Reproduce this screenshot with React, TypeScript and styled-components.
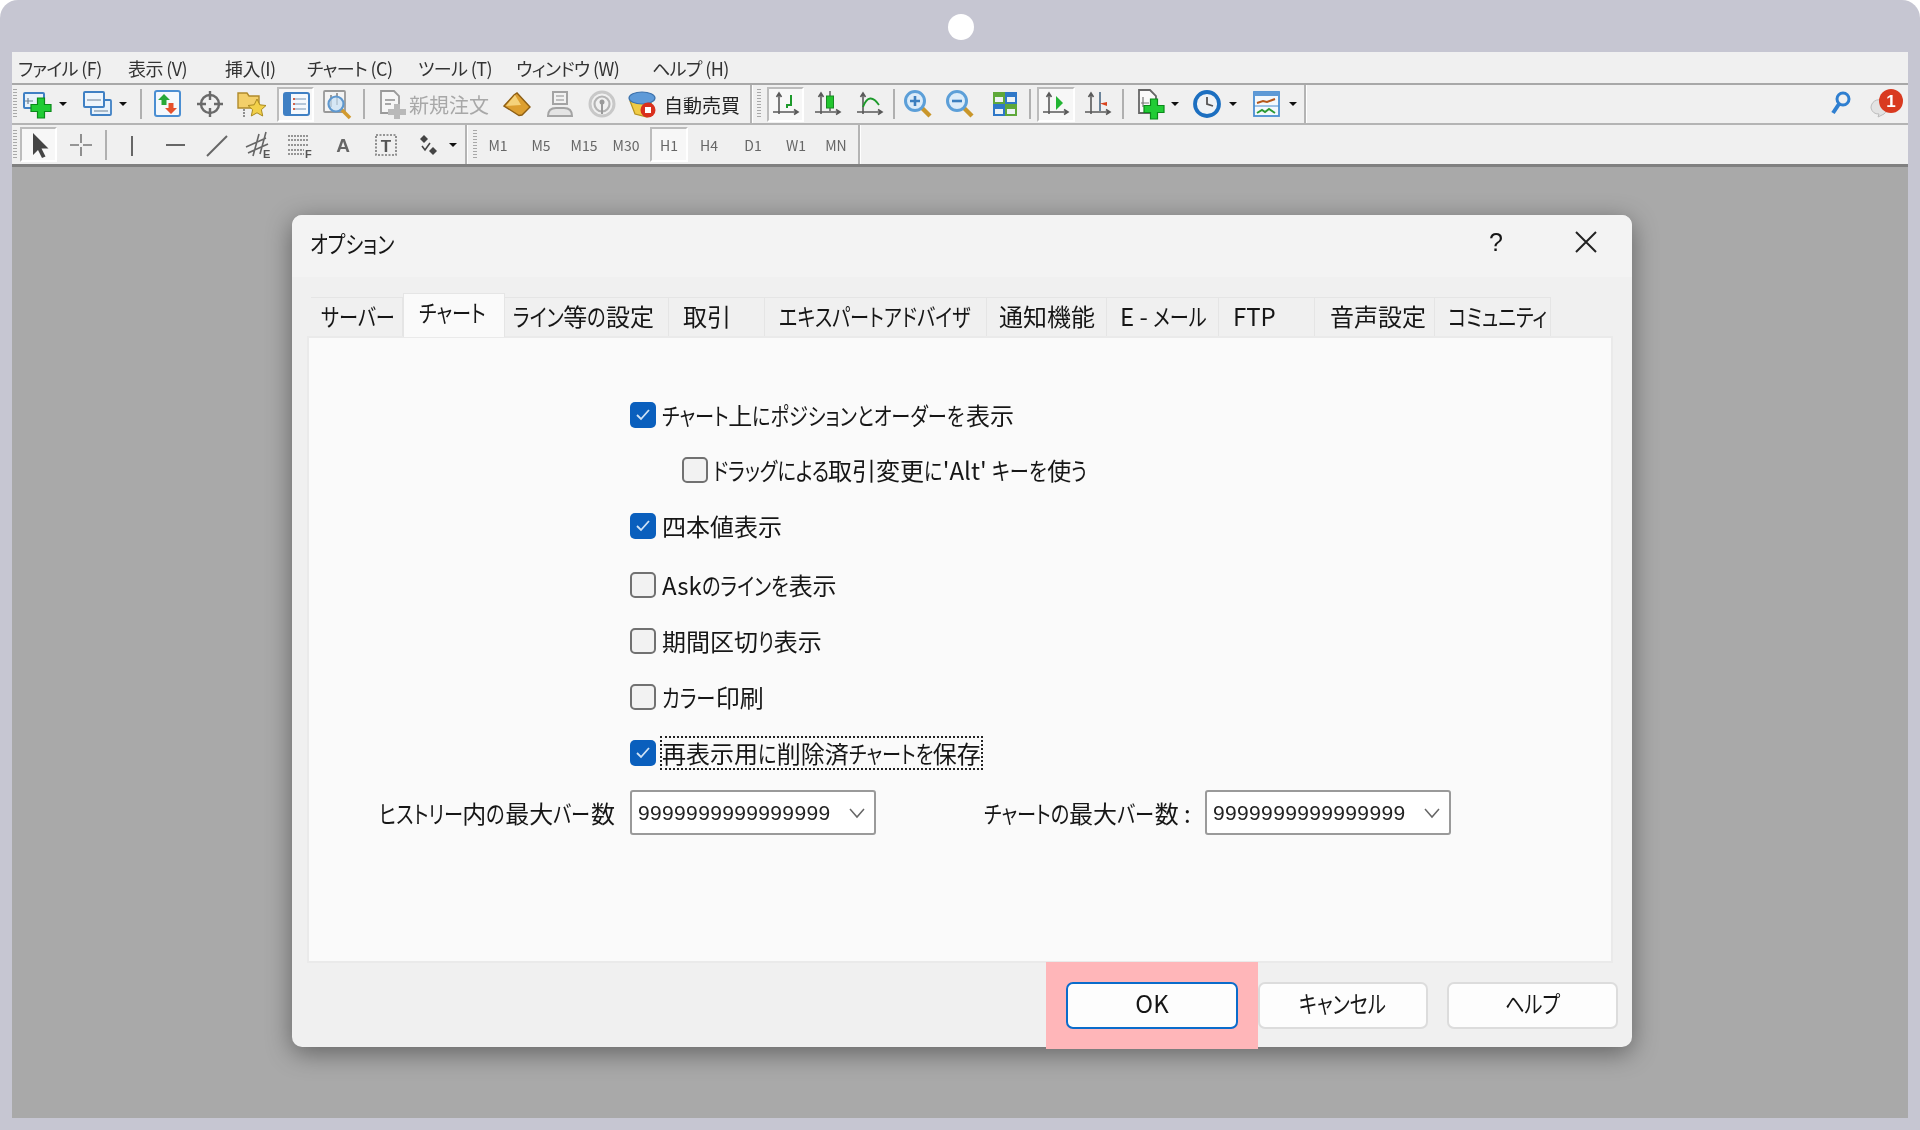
import * as React from "react";
import styled, { createGlobalStyle } from "styled-components";

const GlobalStyle = createGlobalStyle`
  html, body { margin: 0; padding: 0; background: #fff; }
  body { font-family: "Noto Sans CJK JP", "Liberation Sans", sans-serif; color: #161616; }
  * { box-sizing: border-box; }
`;

const SBezel = styled.div`
  width: 1920px;
  height: 1130px;
  background: #c6c6d2;
  border-radius: 18px 18px 0 0;
  padding: 52px 12px 12px;
  position: relative;
  overflow: hidden;
  display: flex;
  flex-direction: column;
`;

const SCamera = styled.div`
  position: absolute;
  left: 948px;
  top: 14px;
  width: 26px;
  height: 26px;
  border-radius: 50%;
  background: #fff;
`;

const SScreen = styled.div`
  flex: 1;
  display: flex;
  flex-direction: column;
  background: #a9a9a9;
  filter: blur(0.35px);
`;

const SMenuBar = styled.div`
  height: 33px;
  background: #f0f0f0;
  border-bottom: 2px solid #a8a8a8;
  display: flex;
  align-items: center;
  padding-left: 6px;
  font-size: 18px;
  color: #333;
  font-feature-settings: "palt";
`;

const SMenuItem = styled.span<{ w: number }>`
  width: ${({ w }) => w}px;
  white-space: nowrap;
  letter-spacing: -0.6px;
`;

const SToolRow = styled.div`
  height: 40px;
  background: #f0f0f0;
  border-bottom: 2px solid #b4b4b4;
  display: flex;
  align-items: center;
`;

const SToolRowLast = styled(SToolRow)`
  height: 42px;
  border-bottom: 3px solid #808080;
`;

const SToolGroup = styled.div<{ w: number }>`
  width: ${({ w }) => w}px;
  height: 100%;
  flex: none;
  display: flex;
  align-items: center;
  border-right: 2px solid #b4b4b4;
  box-shadow: 1px 0 0 #fff;
`;

const SGrip = styled.div<{ ml: number }>`
  width: 4px;
  height: 30px;
  flex: none;
  margin-left: ${({ ml }) => ml}px;
  background: repeating-linear-gradient(to bottom, #a8a8a8 0 1px, transparent 1px 3px);
`;

const STool = styled.div<{ w?: number; ml: number; active?: boolean }>`
  width: ${({ w }) => w ?? 36}px;
  height: 35px;
  margin-left: ${({ ml }) => ml}px;
  flex: none;
  display: flex;
  align-items: center;
  justify-content: center;
  font-size: 14px;
  color: #666;
  background: ${({ active }) => (active ? "#f7f7f7" : "transparent")};
  border-style: solid;
  border-width: ${({ active }) => (active ? "2px" : "0")};
  border-color: #bcbcbc #fff #fff #bcbcbc;
  svg {
    flex: none;
    overflow: visible;
  }
`;

const SToolSep = styled.div<{ ml: number }>`
  width: 2px;
  height: 30px;
  flex: none;
  background: #b0b0b0;
  margin-left: ${({ ml }) => ml}px;
`;

const SCaret = styled.div<{ ml: number }>`
  width: 0;
  height: 0;
  flex: none;
  margin-left: ${({ ml }) => ml}px;
  border-left: 4px solid transparent;
  border-right: 4px solid transparent;
  border-top: 4px solid #111;
`;

const SToolLabel = styled.span<{ w: number; ml: number; disabled?: boolean }>`
  width: ${({ w }) => w}px;
  margin-left: ${({ ml }) => ml}px;
  flex: none;
  font-size: ${({ disabled }) => (disabled ? 20 : 19)}px;
  white-space: nowrap;
  color: ${({ disabled }) => (disabled ? "#a8a8a8" : "#222")};
`;

const SToolSpacer = styled.div`
  flex: 1;
`;

const SRightIcons = styled.div`
  display: flex;
  align-items: center;
  gap: 15px;
  padding-right: 3px;
`;

const SDesktop = styled.div`
  flex: 1;
  padding: 48px 0 0 280px;
`;

const SDialog = styled.div`
  width: 1340px;
  height: 832px;
  border-radius: 10px;
  background: #f0f0f0;
  box-shadow: 0 6px 26px rgba(0, 0, 0, 0.42);
  display: flex;
  flex-direction: column;
`;

const STitleBar = styled.div`
  height: 62px;
  padding: 0 35px 8px 18px;
  display: flex;
  align-items: center;
  justify-content: space-between;
  font-size: 24px;
  background: #f3f3f3;
  border-radius: 10px 10px 0 0;
  font-feature-settings: "palt";
`;

const STitleActions = styled.div`
  display: flex;
  align-items: center;
  gap: 72px;
`;

const SHelpMark = styled.span`
  font-size: 25px;
  font-family: "Liberation Sans", sans-serif;
`;

const STabs = styled.div`
  height: 59px;
  padding: 16px 0 0 19px;
  display: flex;
  align-items: flex-end;
`;

const STab = styled.div<{ w: number; active?: boolean; pad: number }>`
  width: ${({ w }) => w}px;
  height: ${({ active }) => (active ? 44 : 39)}px;
  margin-bottom: ${({ active }) => (active ? -1 : 0)}px;
  padding-left: ${({ pad }) => pad}px;
  padding-bottom: ${({ active }) => (active ? 9 : 3)}px;
  font-size: 24px;
  line-height: 36px;
  white-space: nowrap;
  background: ${({ active }) => (active ? "#fafafa" : "#f0f0f0")};
  border: 1px solid #e5e5e5;
  border-bottom: 0;
  border-left-width: ${({ active }) => (active ? 1 : 0)}px;
  position: relative;
  font-feature-settings: "palt";
  z-index: ${({ active }) => (active ? 1 : 0)};
`;

// squeezes a run of kana, the margin takes back the width the transform does not
const SKana = styled.span<{ n: number }>`
  display: inline-block;
  transform: scaleX(0.8);
  transform-origin: 0 50%;
  margin-right: ${({ n }) => n * -0.18}em;
`;

const SPanel = styled.div`
  width: 1306px;
  height: 627px;
  margin-left: 15px;
  background: #fafafa;
  border: 2px solid #eaeaea;
  padding: 49px 0 0 321px;
  display: flex;
  flex-direction: column;
`;

const SCheckRow = styled.div<{ mt: number; nested?: boolean }>`
  height: 56px;
  margin-top: ${({ mt }) => mt}px;
  display: flex;
  align-items: center;
  padding-left: ${({ nested }) => (nested ? 52 : 0)}px;
  flex: none;
`;

const SCheckBox = styled.div<{ checked?: boolean }>`
  width: 26px;
  height: 26px;
  border-radius: 5px;
  flex: none;
  display: flex;
  align-items: center;
  justify-content: center;
  background: ${({ checked }) => (checked ? "#0a5fbd" : "#f2f2f2")};
  border: ${({ checked }) => (checked ? "0" : "2px solid #717171")};
`;

const SCheckLabel = styled.span<{ focused?: boolean; nested?: boolean }>`
  margin-left: ${({ nested }) => (nested ? 5 : 6)}px;
  font-size: 24px;
  line-height: 30px;
  white-space: nowrap;
  font-feature-settings: "palt";
  outline: ${({ focused }) => (focused ? "2px dotted #222" : "none")};
`;

const SSelectRow = styled.div`
  margin: 9px 0 0 -258px;
  display: flex;
  align-items: center;
  height: 45px;
`;

const SFieldLabel = styled.span<{ w: number; pad?: number }>`
  width: ${({ w }) => w}px;
  padding-left: ${({ pad }) => pad ?? 0}px;
  flex: none;
  font-size: 24px;
  white-space: nowrap;
  font-feature-settings: "palt";
`;

const SSelect = styled.div`
  width: 246px;
  height: 45px;
  flex: none;
  background: #fff;
  border: 2px solid #9a9a9a;
  border-radius: 3px;
  padding: 0 8px 0 6px;
  display: flex;
  align-items: center;
  justify-content: space-between;
  font-family: "Liberation Sans", sans-serif;
  font-size: 21px;
  letter-spacing: 0.35px;
  color: #222;
`;

const SSelectGap = styled.div`
  width: 108px;
  flex: none;
`;

const SFooter = styled.div`
  padding: 19px 14px 0 0;
  display: flex;
  justify-content: flex-end;
`;

const SButton = styled.div<{ w: number; primary?: boolean; gap?: number }>`
  width: ${({ w }) => w}px;
  height: 47px;
  margin-left: ${({ gap }) => gap ?? 0}px;
  padding-bottom: 5px;
  background: #fdfdfd;
  border: ${({ primary }) => (primary ? "2px solid #0a6ccb" : "2px solid #dcdcdc")};
  border-radius: 7px;
  text-align: center;
  line-height: 38px;
  font-size: 24px;
  font-feature-settings: "palt";
  position: relative;
  z-index: 1;
`;

const SHighlight = styled.div`
  position: relative;
  &::before {
    content: "";
    position: absolute;
    left: -20px;
    right: -20px;
    top: -20px;
    bottom: -20px;
    background: #ffb6b9;
  }
`;

// kana in the original UI font is much narrower than kanji
const Jp = ({ text }: { text: string }) => (
  <>
    {text.split(/([\u3040-\u30ff]+)/).map((part, i) =>
      i % 2 ? <SKana key={i} n={part.length}>{part}</SKana> : part
    )}
  </>
);

const Svg = ({ children, w = 30 }: { children: React.ReactNode; w?: number }) => (
  <svg width={w} height={30} viewBox={`0 0 ${w} 30`} fill="none">
    {children}
  </svg>
);

const Plus = ({ x, y }: { x: number; y: number }) => (
  <path
    transform={`translate(${x} ${y})`}
    d="M-3.500 -10h7v6.500h6.500v7h-6.500v6.500h-7v-6.500h-6.500v-7h6.500z"
    fill="#21cc35"
    stroke="#0b8a1a"
    strokeWidth="1.200"
  />
);

const Axes = () => (
  <path
    d="M8 5v20M2 23h24M5.500 8L8 4l2.500 4M23 20.500l4 2.500-4 2.500"
    stroke="#5a5a5a"
    strokeWidth="1.600"
  />
);

const Lens = ({ minus }: { minus?: boolean }) => (
  <>
    <path d="M19 19l8 8" stroke="#c9962a" strokeWidth="4.500" />
    <circle cx="12" cy="12" r="9.500" fill="#dcecf9" stroke="#5c9fd8" strokeWidth="3" />
    <path d={minus ? "M7 12h10" : "M7 12h10M12 7v10"} stroke="#3c7fbf" strokeWidth="2.600" />
  </>
);

const tfButtons = [
  { tf: "M1", ml: 3 },
  { tf: "M5", ml: 7 },
  { tf: "M15", ml: 7 },
  { tf: "M30", ml: 6 },
  { tf: "H1", ml: 6, active: true },
  { tf: "H4", ml: 3 },
  { tf: "D1", ml: 8 },
  { tf: "W1", ml: 7 },
  { tf: "MN", ml: 4 },
];

const App = () => {
  return (
    <SBezel>
      <GlobalStyle />
      <SCamera />
      <SScreen>
        <SMenuBar>
          <SMenuItem w={110}>ファイル (F)</SMenuItem>
          <SMenuItem w={97}>表示 (V)</SMenuItem>
          <SMenuItem w={82}>挿入(I)</SMenuItem>
          <SMenuItem w={111}>チャート (C)</SMenuItem>
          <SMenuItem w={98}>ツール (T)</SMenuItem>
          <SMenuItem w={136}>ウィンドウ (W)</SMenuItem>
          <SMenuItem w={100}>ヘルプ (H)</SMenuItem>
        </SMenuBar>

        <SToolRow>
          <SToolGroup w={740}>
            <SGrip ml={1} />
            <STool ml={2}>
              <Svg>
                <rect x="2" y="4" width="20" height="15" rx="1" fill="#e8f2fb" stroke="#3f80c4" strokeWidth="2" />
                <path d="M6 9v6M3 12h8" stroke="#6b7f92" strokeWidth="1.200" />
                <Plus x={19} y={19} />
              </Svg>
            </STool>
            <SCaret ml={4} />
            <STool ml={12}>
              <Svg>
                <rect x="9" y="11" width="20" height="15" rx="1" fill="#e8f2fb" stroke="#3f80c4" strokeWidth="1.800" />
                <rect x="2" y="3" width="20" height="15" rx="1" fill="#eef5fc" stroke="#3f80c4" strokeWidth="2" />
                <path d="M5 11h14M12 22h14" stroke="#6b7f92" strokeWidth="1.200" />
              </Svg>
            </STool>
            <SCaret ml={4} />
            <SToolSep ml={13} />
            <STool ml={7}>
              <Svg>
                <rect x="3" y="2" width="25" height="25" rx="2" fill="#f4f8fc" stroke="#4a8ed2" strokeWidth="2" />
                <path d="M12 5l6 6h-3.500v5h-5v-5H6z" fill="#27a838" />
                <path d="M19 25l-6-6h3.500v-5h5v5H25z" fill="#e5502c" />
              </Svg>
            </STool>
            <STool ml={7}>
              <Svg>
                <circle cx="15" cy="15" r="9" stroke="#6a6a6a" strokeWidth="2.400" />
                <path d="M15 2v9M15 19v9M2 15h9M19 15h9" stroke="#6a6a6a" strokeWidth="2.400" />
              </Svg>
            </STool>
            <STool ml={6}>
              <Svg>
                <path d="M1 4h9l2 3h10v12H1z" fill="#f3cf6a" stroke="#b08a2c" strokeWidth="1.400" />
                <path d="M7 20v8" stroke="#777" strokeDasharray="2 1" strokeWidth="1.600" />
                <path d="M20 10l2.800 5.800 6.200.7-4.600 4.200 1.300 6.300-5.700-3.200-5.700 3.200 1.300-6.300-4.600-4.200 6.200-.7z" fill="#f2d04a" stroke="#a98a20" strokeWidth="1" />
              </Svg>
            </STool>
            <STool w={37} ml={7} active>
              <Svg>
                <rect x="3" y="4" width="25" height="22" rx="2" fill="#f5f9fd" stroke="#3f80c4" strokeWidth="2" />
                <rect x="3" y="4" width="7" height="22" fill="#3f80c4" />
                <path d="M12 10h13M12 15h13M12 20h13" stroke="#9fb5cc" strokeWidth="1.400" />
                <path d="M12 10h2M12 15h2M12 20h2" stroke="#d9441e" strokeWidth="1.400" />
              </Svg>
            </STool>
            <STool ml={5}>
              <Svg>
                <rect x="2" y="2" width="21" height="21" rx="1" fill="#f4f4f4" stroke="#999" strokeWidth="1.800" />
                <path d="M19 20l9 9" stroke="#d29a2e" strokeWidth="3.500" />
                <path d="M9 6v12M15 4v12" stroke="#777" strokeWidth="1.400" />
                <circle cx="14" cy="15" r="7.500" fill="#c9e1f5" fillOpacity=".7" stroke="#5e98cf" strokeWidth="2.200" />
              </Svg>
            </STool>
            <SToolSep ml={8} />
            <STool w={32} ml={11}>
              <Svg>
                <path d="M4 2h13l5 5v17H4z" fill="#f6f6f6" stroke="#9a9a9a" strokeWidth="1.800" />
                <path d="M8 11h10M8 15h6" stroke="#a8a8a8" strokeWidth="1.800" />
                <path d="M17 15h6v5h6v6h-6v4h-6v-4h-6v-6h6z" fill="#b9b9b9" />
              </Svg>
            </STool>
            <SToolLabel w={80} ml={1} disabled>新規注文</SToolLabel>
            <STool ml={10}>
              <Svg>
                <path d="M2 17L12 6l3-2 13 14-8 8-3 .5z" fill="#dd9f30" stroke="#8e5f14" strokeWidth="1.400" />
                <path d="M13 6l6 10-15 1z" fill="#f5d27a" />
              </Svg>
            </STool>
            <STool ml={7}>
              <Svg>
                <path d="M8 3h14v12H8z" fill="#f3f3f3" stroke="#a4a4a4" strokeWidth="2" />
                <path d="M11 7h8M11 11h8" stroke="#b0b0b0" strokeWidth="1.600" />
                <path d="M3 27c0-6 4-8 8-8h8c6 0 8 3 8 8z" fill="#e4e4e4" stroke="#a4a4a4" strokeWidth="2" />
              </Svg>
            </STool>
            <STool ml={6}>
              <Svg>
                <circle cx="15" cy="15" r="12" fill="#f0f0f0" stroke="#c8c8c8" strokeWidth="3" />
                <circle cx="15" cy="15" r="7.500" stroke="#b4b4b4" strokeWidth="2.200" />
                <circle cx="15" cy="13" r="2.500" fill="#9a9a9a" />
                <path d="M15 14v11" stroke="#9a9a9a" strokeWidth="2" />
              </Svg>
            </STool>
            <STool ml={4}>
              <Svg>
                <path d="M3 12l5 13 12 3 6-8-3-9z" fill="#f0cb45" stroke="#b5911e" strokeWidth="1.200" />
                <ellipse cx="15" cy="9" rx="13" ry="6" fill="#5e9ad8" stroke="#3c72ad" strokeWidth="1.200" />
                <circle cx="21" cy="21" r="7.500" fill="#d9301e" />
                <rect x="18" y="18" width="6" height="6" fill="#fff" />
              </Svg>
            </STool>
            <SToolLabel w={76} ml={4}>自動売買</SToolLabel>
          </SToolGroup>
          <SToolGroup w={554}>
            <SGrip ml={5} />
            <STool w={37} ml={6} active>
              <Svg>
                <Axes />
                <path d="M20 6v10h-4v3" stroke="#1d9a2b" strokeWidth="2" />
              </Svg>
            </STool>
            <STool ml={6}>
              <Svg>
                <Axes />
                <path d="M17 2v20" stroke="#555" strokeWidth="1.400" />
                <rect x="13.500" y="7" width="7" height="12" fill="#22c52e" stroke="#178a22" />
              </Svg>
            </STool>
            <STool ml={6}>
              <Svg>
                <Axes />
                <path d="M8 18c4-11 10-11 16-2" stroke="#1d9a2b" strokeWidth="1.800" />
              </Svg>
            </STool>
            <SToolSep ml={5} />
            <STool ml={5}>
              <Svg>
                <Lens />
              </Svg>
            </STool>
            <STool ml={6}>
              <Svg>
                <Lens minus />
              </Svg>
            </STool>
            <STool ml={9}>
              <Svg>
                <rect x="3" y="3" width="12" height="12" fill="#5fa83a" />
                <rect x="15" y="3" width="12" height="12" fill="#2f78c8" />
                <rect x="3" y="15" width="12" height="12" fill="#2f78c8" />
                <rect x="15" y="15" width="12" height="12" fill="#5fa83a" />
                <path d="M5 8h8v5H5zM17 8h8v5h-8zM5 20h8v5H5zM17 20h8v5h-8z" fill="#eef3f6" />
              </Svg>
            </STool>
            <SToolSep ml={6} />
            <STool w={38} ml={6} active>
              <Svg>
                <Axes />
                <path d="M15 7l7 7-7 7z" fill="#22b533" />
              </Svg>
            </STool>
            <STool ml={5}>
              <Svg>
                <Axes />
                <path d="M17 3v19" stroke="#5d7890" strokeWidth="1.800" />
                <path d="M24 13l-7 1.500 7 2.500z" fill="#d9441e" />
              </Svg>
            </STool>
            <SToolSep ml={6} />
            <STool ml={8}>
              <Svg>
                <path d="M4 1h11l6 6v17H4z" fill="#fafafa" stroke="#666" strokeWidth="1.800" />
                <path d="M8 8v10M6 14h8" stroke="#777" strokeWidth="1.200" />
                <Plus x={19} y={20} />
              </Svg>
            </STool>
            <SCaret ml={3} />
            <STool ml={10}>
              <Svg>
                <circle cx="15" cy="15" r="12" fill="#eef2f5" stroke="#1c6fc0" strokeWidth="3.800" />
                <path d="M15 8v7l6 2" stroke="#555" strokeWidth="1.800" />
              </Svg>
            </STool>
            <SCaret ml={4} />
            <STool ml={11}>
              <Svg>
                <rect x="3" y="3" width="25" height="24" fill="#f4f8fc" stroke="#4a8ed2" strokeWidth="1.800" />
                <rect x="3" y="3" width="25" height="4" fill="#5f9ad6" />
                <path d="M6 14l6-2 4 1 8-3" stroke="#b5561a" strokeWidth="2" />
                <path d="M3 17h25" stroke="#4a8ed2" />
                <path d="M6 24l5-3 3 2 4-3 6 4" stroke="#2c9a35" strokeWidth="2" />
              </Svg>
            </STool>
            <SCaret ml={5} />
          </SToolGroup>
          <SToolSpacer />
          <SRightIcons>
            <Svg w={26}>
              <circle cx="15" cy="10" r="6" stroke="#2f7fd0" strokeWidth="3" />
              <path d="M11 15l-6 9" stroke="#2f7fd0" strokeWidth="4" />
            </Svg>
            <Svg w={36}>
              <path d="M2 19a8 8 0 1 1 13 6l-6 3 1-3a8 8 0 0 1-8-6z" fill="#e3e3e3" stroke="#bdbdbd" />
              <circle cx="22" cy="12" r="12" fill="#d93a20" />
              <text x="22" y="18" fontSize="17" fontWeight="700" textAnchor="middle" fill="#fff" fontFamily="Liberation Sans">1</text>
            </Svg>
          </SRightIcons>
        </SToolRow>

        <SToolRowLast>
          <SToolGroup w={455}>
            <SGrip ml={1} />
            <STool w={37} ml={3} active>
              <Svg>
                <path d="M9 3v22l5-5 4 8 3.500-1.500-4-8h7z" fill="#444" />
              </Svg>
            </STool>
            <STool ml={6}>
              <Svg>
                <path d="M15 4v9M15 17v9M4 15h9M17 15h9" stroke="#777" strokeWidth="1.600" />
              </Svg>
            </STool>
            <SToolSep ml={6} />
            <STool ml={7}>
              <Svg>
                <path d="M15 6v20" stroke="#666" strokeWidth="2" />
              </Svg>
            </STool>
            <STool ml={7}>
              <Svg>
                <path d="M6 15h19" stroke="#666" strokeWidth="2" />
              </Svg>
            </STool>
            <STool ml={6}>
              <Svg>
                <path d="M5 26L25 6" stroke="#666" strokeWidth="2" />
              </Svg>
            </STool>
            <STool ml={5}>
              <Svg>
                <path d="M3 17l20-9M5 23l20-9M10 26l6-22M17 24l6-22" stroke="#666" strokeWidth="1.600" />
                <text x="20" y="28" fontSize="11" fontWeight="700" fill="#555" fontFamily="Liberation Sans">E</text>
              </Svg>
            </STool>
            <STool ml={6}>
              <Svg>
                <path d="M3 6h20M3 10h20M3 15h20M3 20h16M3 24h16" stroke="#777" strokeWidth="1.400" strokeDasharray="2 1" />
                <text x="20" y="28" fontSize="11" fontWeight="700" fill="#555" fontFamily="Liberation Sans">F</text>
              </Svg>
            </STool>
            <STool ml={7}>
              <Svg>
                <text x="15" y="22" fontSize="19" fontWeight="700" textAnchor="middle" fill="#666" fontFamily="Liberation Sans">A</text>
              </Svg>
            </STool>
            <STool ml={7}>
              <Svg>
                <rect x="5" y="5" width="20" height="20" stroke="#777" strokeWidth="1.600" strokeDasharray="2 1.500" />
                <text x="15" y="22" fontSize="17" fontWeight="700" textAnchor="middle" fill="#555" fontFamily="Liberation Sans">T</text>
              </Svg>
            </STool>
            <STool ml={6}>
              <Svg>
                <path d="M7 9l4-4 4 4-4 4zM16 21l4-4 4 4-4 4z" fill="#444" />
                <path d="M9 16l3 4 5-7" stroke="#444" strokeWidth="1.600" />
              </Svg>
            </STool>
            <SCaret ml={3} />
          </SToolGroup>
          <SGrip ml={6} />
          <SToolGroup w={383}>
            {tfButtons.map(({ tf, ml, active }) => (
              <STool key={tf} ml={ml} w={active ? 38 : 36} active={active}>
                {tf}
              </STool>
            ))}
          </SToolGroup>
        </SToolRowLast>

        <SDesktop>
          <SDialog>
            <STitleBar>
              <span><Jp text="オプション" /></span>
              <STitleActions>
                <SHelpMark>?</SHelpMark>
                <svg width="22" height="22" viewBox="0 0 22 22" fill="none">
                  <path d="M1 1l20 20M21 1L1 21" stroke="#222" strokeWidth="2" />
                </svg>
              </STitleActions>
            </STitleBar>
            <STabs>
              <STab w={92} pad={10}><Jp text="サーバー" /></STab>
              <STab w={102} pad={15} active><Jp text="チャート" /></STab>
              <STab w={164} pad={8}><Jp text="ライン等の設定" /></STab>
              <STab w={96} pad={14}><Jp text="取引" /></STab>
              <STab w={222} pad={14}><Jp text="エキスパートアドバイザ" /></STab>
              <STab w={120} pad={12}><Jp text="通知機能" /></STab>
              <STab w={112} pad={13}><Jp text="E - メール" /></STab>
              <STab w={96} pad={14}>FTP</STab>
              <STab w={120} pad={15}><Jp text="音声設定" /></STab>
              <STab w={116} pad={13}><Jp text="コミュニティ" /></STab>
            </STabs>
            <SPanel>
              <Check mt={0} checked label="チャート上にポジションとオーダーを表示" />
              <Check mt={-1} nested label="ドラッグによる取引変更に'Alt' キーを使う" />
              <Check mt={0} checked label="四本値表示" />
              <Check mt={3} label="Askのラインを表示" />
              <Check mt={0} label="期間区切り表示" />
              <Check mt={0} label="カラー印刷" />
              <Check mt={0} checked focused label="再表示用に削除済チャートを保存" />
              <SSelectRow>
                <SFieldLabel w={258} pad={7}><Jp text="ヒストリー内の最大バー数" /></SFieldLabel>
                <SSelect>
                  9999999999999999
                  <Chevron />
                </SSelect>
                <SSelectGap />
                <SFieldLabel w={221}><Jp text="チャートの最大バー数 :" /></SFieldLabel>
                <SSelect>
                  9999999999999999
                  <Chevron />
                </SSelect>
              </SSelectRow>
            </SPanel>
            <SFooter>
              <SHighlight>
                <SButton w={172} primary>OK</SButton>
              </SHighlight>
              <SButton w={170} gap={20}><Jp text="キャンセル" /></SButton>
              <SButton w={171} gap={19}><Jp text="ヘルプ" /></SButton>
            </SFooter>
          </SDialog>
        </SDesktop>
      </SScreen>
    </SBezel>
  );
};

const Chevron = () => (
  <svg width="18" height="12" viewBox="0 0 18 12" fill="none">
    <path d="M2 2l7 8 7-8" stroke="#666" strokeWidth="1.500" />
  </svg>
);

interface CheckProps {
  mt: number;
  label: string;
  checked?: boolean;
  nested?: boolean;
  focused?: boolean;
}

const Check = ({ mt, label, checked, nested, focused }: CheckProps) => (
  <SCheckRow mt={mt} nested={nested}>
    <SCheckBox checked={checked}>
      {checked && (
        <svg width="16" height="14" viewBox="0 0 16 14" fill="none">
          <path d="M2 7l4 4 8-9" stroke="#cfe2f5" strokeWidth="1.800" />
        </svg>
      )}
    </SCheckBox>
    <SCheckLabel focused={focused} nested={nested}><Jp text={label} /></SCheckLabel>
  </SCheckRow>
);

export default App;
